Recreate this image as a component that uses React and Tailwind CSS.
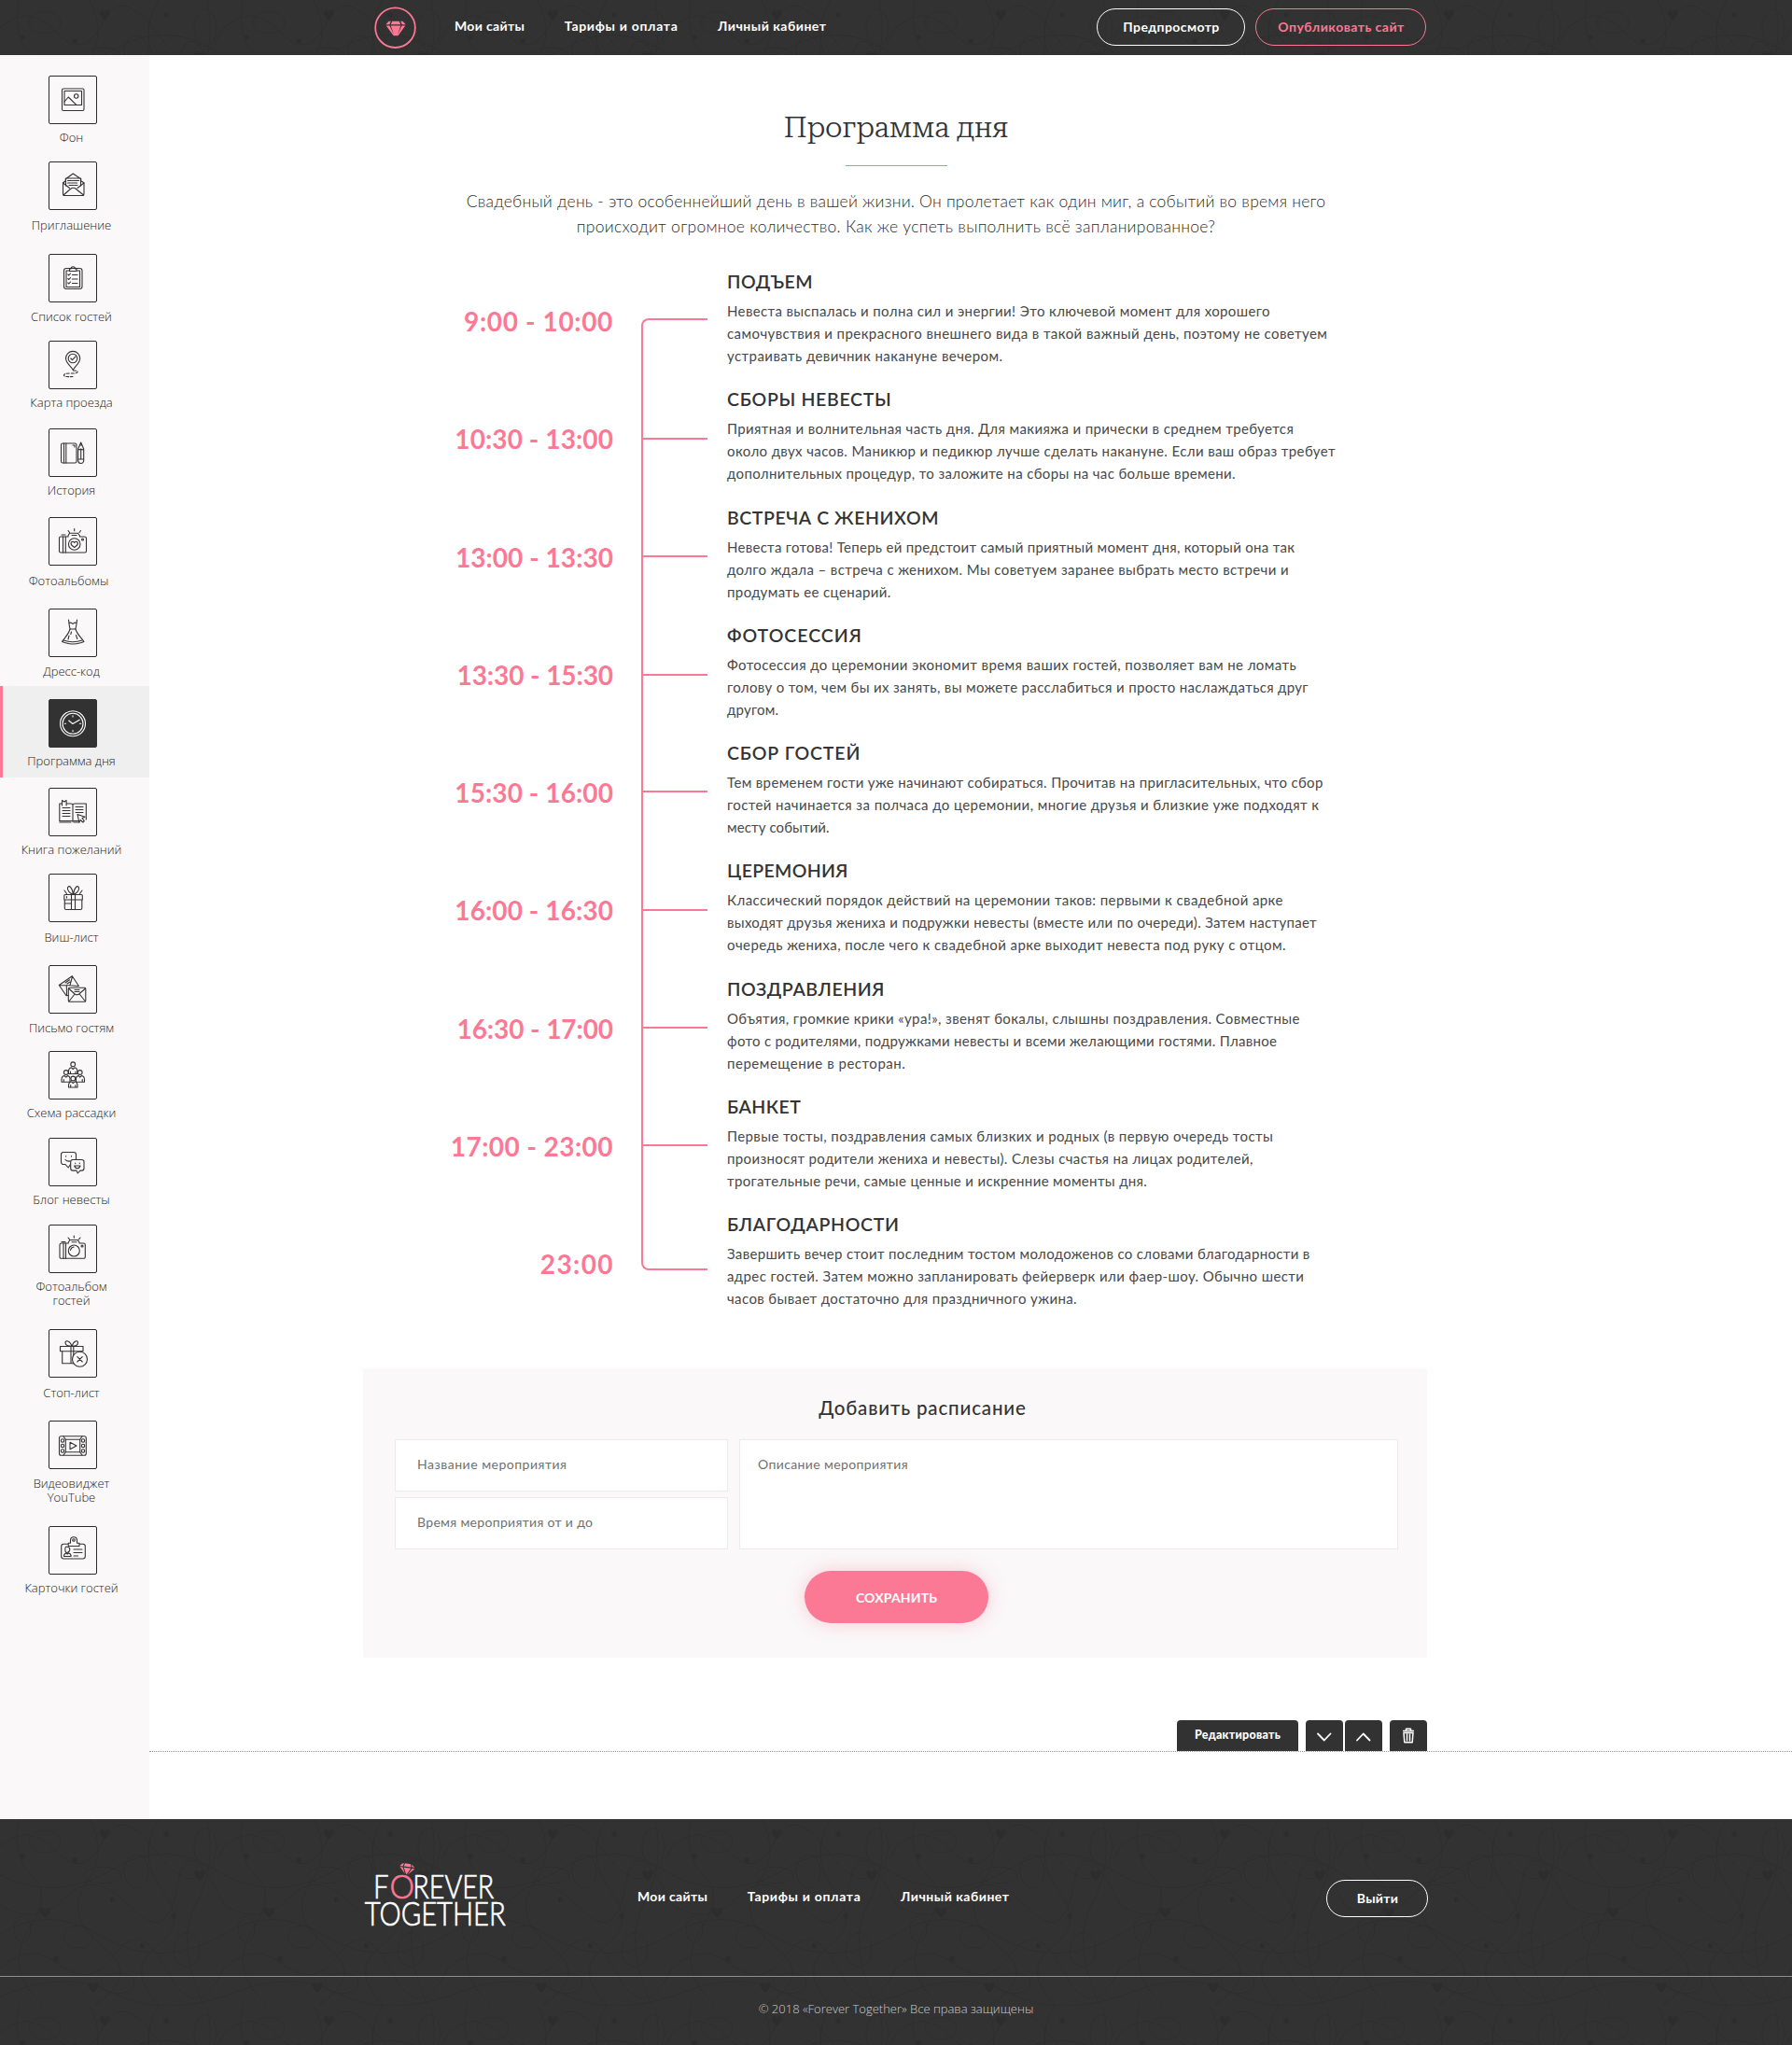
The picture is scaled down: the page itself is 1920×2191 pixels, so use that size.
import React from "react";

const c = (d) => <path d={d} />;

const icons = {
  background: (
    <>
      <rect x="14.5" y="14" width="23.5" height="23.5" rx="1.5" />
      <rect x="17" y="16.5" width="18.5" height="15" />
      <circle cx="29.7" cy="22" r="2.2" />
      {c("M17 28l4.2-5 8.6 8.3")}
    </>
  ),
  invite: (
    <>
      {c("M18 19l8.3-6 8.7 6M18.5 18h16v8M18.5 18v8M18.5 20.5l-3 2.5v11.500a2 2 0 0 0 2 2h18.500a2 2 0 0 0 2-2V23l-3.500-2.500")}
      {c("M15.500 23l7 5.500M38 23l-7 5.500M16 36l7.500-6.500q3-2.500 6 0L37.500 36")}
      {c("M20.500 20.500h5m1 0h6M20.500 23h3m1 0h6M22 25.500h5m1 0h3")}
    </>
  ),
  list: (
    <>
      <rect x="16.500" y="15.500" width="19.500" height="22" rx="2.500" />
      {c("M22 18h-3v17.500h14.500V18h-3")}
      {c("M22.500 18.500v-2.500h1.500a2 2 0 0 1 4.500 0h1.500v2.500z")}
      {c("M20.800 22l1 1 1.700-2M20.800 26.500l1 1 1.700-2M20.800 31l1 1 1.700-2M25.500 22.500h5.500M25.500 27h5.500M25.500 31.500h5.500")}
    </>
  ),
  map: (
    <>
      {c("M26.300 31.500c-2-4-7.800-7.500-7.800-12.500a7.600 7.600 0 0 1 15.200 0c0 5-5.400 8.500-7.400 12.500z")}
      <circle cx="26" cy="19" r="4.800" />
      {c("M23.800 19l1.700 1.700 3.300-3.500")}
      <path strokeDasharray="3 1.800" d="M26.500 32c3 0 5 .500 4.500 1.800s-4 1.200-8 1.200-6.500.500-6.500 2 2.500 1.800 9.500 1.500" />
    </>
  ),
  story: (
    <>
      <rect x="13.500" y="16" width="16.500" height="21" rx="1.800" />
      {c("M16.500 16v21M18.800 16v21M26 18h2v2")}
      {c("M34.700 15l-3 7v12.500a2.500 2.500 0 0 0 6 0V22zM31.700 22q1.500 1.500 3 0 1.500 1.500 3 0M34.700 22.500v10.500M31.700 33h6M33.500 18h2.400")}
    </>
  ),
  cameraHeart: (
    <>
      {c("M21 21v-1l1.500-2.800h9L33.500 20v1H38.500a2 2 0 0 1 2 2v13.500a1.500 1.500 0 0 1-1.500 1.500H13a1.500 1.500 0 0 1-1.500-1.500V22.500A1.500 1.500 0 0 1 13 21z")}
      {c("M15.500 21v17M18.300 21v17M14 19h4M25 19.500h5")}
      <circle cx="27.700" cy="29" r="6.300" />
      {c("M27.700 32.500c-1.700-1.200-3.700-2.500-3.700-4.300 0-2.200 2.700-2.500 3.700-.700 1-1.800 3.700-1.500 3.700.7 0 1.800-2 3.100-3.700 4.300z")}
      <circle cx="36.500" cy="24" r="1" />
      {c("M27.700 12.500v2.300M21 14.500l1.500 2M34.500 14.500l-1.500 2")}
    </>
  ),
  dress: (
    <>
      {c("M21.500 12l.5 4.500q.5 3.500 1.200 5.500M30.500 12l-.5 4.500q-.5 3.500-1.200 5.500M22 15.500q2.300-1 4 1 1.700-2 4-1M23 22h6")}
      {c("M23 22c-1.500 5.500-5 8.500-8.500 13.500 2 .5 3 1.500 5 1.500 2 .8 4 1 6.500 1s5-.2 7-1c2 0 3-1 5-1.500-3.500-5-7.500-8-9-13.500")}
      {c("M16 34q10 3.500 20 0M22 29l-1 4M24.500 25l-.7 2.500M29.500 28.500l1.300 4")}
    </>
  ),
  clock: (
    <>
      <circle cx="26" cy="26.300" r="13.500" />
      <circle cx="26" cy="26.300" r="11" />
      {c("M21.700 23l4.200 3.500 7.300-4.300M26 17.800v1.200M26 33.500v1.300M17.300 26.300h1.200M33.500 26.300h1.300")}
    </>
  ),
  wishes: (
    <>
      {c("M14.500 17H11.800v18.500h13q1.200 1.300 2.400 0H32M19.500 17H24q2 0 2 1.500 0-1.500 2-1.500h12.300v17M26 18.500V35.500M14.500 19v-5.500l2.300 1.500 2.300-1.500V19M11.800 37H24M27 37h6")}
      {c("M15 21.500h8M15 24.500h8M15 27.500h8M15 30.500h8M29 20.500h8M29 23.500h8M29 26.500h8")}
      {c("M31 28.500l8 2.800-3 1.200 2.300 3-1.500 1.500-2.500-2.500-1.500 2.500z")}
    </>
  ),
  gift: (
    <>
      {c("M16.800 23.500a1 1 0 0 1 1-1h17.500a1 1 0 0 1 1 1V28H16.800zM17.300 28v9a1.500 1.500 0 0 0 1.500 1.500h15.500a1.500 1.500 0 0 0 1.500-1.500v-9M24.500 22.500v16M28.500 22.500v16")}
      {c("M26.500 22.500c-3-1-7-4-6-7.500 1.500-3.500 5 0 6 7.500zM26.500 22.500c3-1 7-4 6-7.500-1.500-3.500-5 0-6 7.500zM17 18l2.500 3.500M36 18l-2.500 3.500")}
      {c("M19.500 26v-1.500M17.300 32h7")}
    </>
  ),
  letters: (
    <>
      {c("M21 32.500l-2 .2-7.700-11.200 14-9.800 7 10.500M11.500 21.500l11.500.2 2.500-9.700M19.500 32l-.2-10.500M23 21.700L32 22.500M18 19l4.500-3.200M20 20l3-2")}
      <rect x="21.300" y="24.300" width="18.500" height="15" rx="1.200" />
      {c("M21.600 25l6.500 6q2.300 1.500 4.600 0l6.800-6M21.800 39l6.300-8M39.500 39l-6.300-8M28 26.500h5M28 28.500h5")}
    </>
  ),
  seating: (
    <>
      <circle cx="26.200" cy="14.300" r="2.400" />
      {c("M21.500 24.500v-2.500q0-3.500 3-4.200l1.700 1.700 1.700-1.700q3 .7 3 4.200v2.500zM23.500 22v2.500M29 22v2.500")}
      <circle cx="18.800" cy="23" r="2.400" />
      {c("M14 33.200v-2.500q0-3.500 3-4.200l1.800 1.700 1.700-1.700q2.500.7 2.500 3v3.700zM16.300 30.500v2.500")}
      <circle cx="33.700" cy="23" r="2.400" />
      {c("M38.500 33.200v-2.500q0-3.500-3-4.200l-1.800 1.700-1.700-1.700q-2.500.7-2.500 3v3.700zM36.200 30.500v2.500")}
      <circle cx="26.300" cy="29.500" r="2.400" />
      {c("M21.500 39v-2q0-3.500 3-4.200l1.800 1.700 1.700-1.700q3 .7 3 4.200v2zM23.700 36.500v2.500M28.900 36.500v2.500")}
    </>
  ),
  blog: (
    <>
      {c("M23.500 28.500l-2.300 3.500-3.200-3.500h-2a2.500 2.500 0 0 1-2.500-2.500v-8a2.500 2.500 0 0 1 2.500-2.500h11a2.500 2.500 0 0 1 2.500 2.500v5.500M18.700 19.500v.6M24.500 19.500v.6M18 23.500q2 2.200 5 1.500")}
      {c("M26 23.500h9.700a2.300 2.300 0 0 1 2.300 2.300v7a2.300 2.300 0 0 1-2.300 2.300H34L31.300 38 30 35.100H26a2.300 2.300 0 0 1-2.300-2.300v-7A2.300 2.300 0 0 1 26 23.500zM28.700 27v.6M33.300 27v.6M27.700 30h6.300q-.7 2.700-3.100 2.700T27.700 30z")}
    </>
  ),
  camera: (
    <>
      {c("M21.300 20v-1l1.500-2.500h8.500L33 19v1h4.500a1.800 1.800 0 0 1 1.800 1.800v13a1.500 1.500 0 0 1-1.500 1.500h-24.300a1.500 1.500 0 0 1-1.500-1.500v-13A1.800 1.800 0 0 1 13.800 20z")}
      {c("M16 20v16.300M18.500 20v16.300M14 18.500h4M25 18.700h5M23.500 27.500q.5-3 3.500-3.500")}
      <circle cx="27.300" cy="28" r="6" />
      <circle cx="36" cy="23" r="1" />
      {c("M27.300 12v2.200M21 14l1.500 1.800M34 14l-1.500 1.800")}
    </>
  ),
  stop: (
    <>
      <rect x="12.500" y="18.500" width="24.500" height="5.300" />
      {c("M14.700 23.800v13h13M35.300 23.800v3M24 18.500v18.300M26.800 18.500v10")}
      {c("M25 18.300c-3.500 0-7-1-7-3.800 0-3 5-2.500 7 3.800zM25 18.300c3.500 0 6.500-1 6.500-3.800 0-3-4.500-2.500-6.500 3.800z")}
      <circle cx="33.500" cy="32.300" r="8" className="fill-[#faf8f9]" />
      {c("M30.800 29.600l5.400 5.400M36.200 29.600l-5.400 5.400")}
    </>
  ),
  video: (
    <>
      <rect x="11.500" y="16.800" width="28.800" height="20.400" rx="2" />
      <rect x="18.300" y="20.300" width="15.400" height="13.500" />
      {c("M23 23.300v7.500l7-3.800zM16 17l2.300 3.300M36 17l-2.300 3.300M18.300 33.800L16 37M33.700 33.800L36 37")}
      {[21.5, 27, 32.5].map((y) => (
        <React.Fragment key={y}>
          <circle cx="15" cy={y} r="1.700" />
          <circle cx="37" cy={y} r="1.700" />
        </React.Fragment>
      ))}
    </>
  ),
  cards: (
    <>
      {c("M21 19.300h-4.800a2.500 2.500 0 0 0-2.500 2.500v10.700a2.500 2.500 0 0 0 2.500 2.500h20.600a2.500 2.500 0 0 0 2.500-2.500V21.800a2.500 2.500 0 0 0-2.500-2.500H33M21.200 21.500V18.300h2.300v-3a3.500 3.500 0 0 1 7 0v3h2.500v3.200z")}
      <circle cx="27" cy="15" r="1.300" />
      {c("M20.300 22.500q2.500 0 2.500 2.500t-2.500 3.300-2.500-3.300 2.500-2.500zM16.500 32.500q0-3 2.500-3.500l1.300 1 1.300-1q2.500.5 2.500 3.500zM27 25h9M27 28.500h9M27 32h4.500")}
    </>
  ),
};

// icon, label, row height, label offset
const sidebar = [
  ["background", "Фон", "h-[92px]", "mt-[7px]"],
  ["invite", "Приглашение", "h-[99px]", "mt-[9px]"],
  ["list", "Список гостей", "h-[93px]", "mt-[8px]"],
  ["map", "Карта проезда", "h-[94px]", "mt-[7px]"],
  ["story", "История", "h-[95px]", "mt-[7px]"],
  ["cameraHeart", "Фотоальбомы", "h-[98px]", "mt-[9px] -ml-[3px]"],
  ["dress", "Дресс-код", "h-[97px]", "mt-[8px]"],
  ["clock", "Программа дня", "h-[98px]", "mt-[7px]"],
  ["wishes", "Книга пожеланий", "-mt-[3px] h-[92px]", "mt-[7px]"],
  ["gift", "Виш-лист", "h-[98px]", "mt-[9px]"],
  ["letters", "Письмо гостям", "h-[92px]", "mt-[8px]"],
  ["seating", "Схема рассадки", "h-[93px]", "mt-[7px]"],
  ["blog", "Блог невесты", "h-[93px]", "mt-[7px]"],
  ["camera", "Фотоальбом\nгостей", "h-[112px]", "mt-[7px]"],
  ["stop", "Стоп-лист", "h-[98px]", "mt-[9px]"],
  ["video", "Видеовиджет\nYouTube", "h-[113px]", "mt-[8px]"],
  ["cards", "Карточки гостей", "h-[92px]", "mt-[7px]"],
];

const schedule = [
  {
    time: ["9:00 - 10:00", "tracking-[0.650px]"],
    title: ["ПОДЪЕМ", "tracking-[0.570px]"],
    lines: [
      ["Невеста выспалась и полна сил и энергии! Это ключевой момент для хорошего", "tracking-[0.380px]"],
      ["самочувствия и прекрасного внешнего вида в такой важный день, поэтому не советуем", "tracking-[0.430px]"],
      ["устраивать девичник накануне вечером.", "tracking-[0.440px]"],
    ],
  },
  {
    time: ["10:30 - 13:00", "tracking-[0.100px]"],
    title: ["СБОРЫ НЕВЕСТЫ", "tracking-[0.690px]"],
    lines: [
      ["Приятная и волнительная часть дня. Для макияжа и прически в среднем требуется", "tracking-[0.380px]"],
      ["около двух часов. Маникюр и педикюр лучше сделать накануне. Если ваш образ требует", "tracking-[0.390px]"],
      ["дополнительных процедур, то заложите на сборы на час больше времени.", "tracking-[0.370px]"],
    ],
  },
  {
    time: ["13:00 - 13:30", "tracking-[0.050px]"],
    title: ["ВСТРЕЧА С ЖЕНИХОМ", "tracking-[0.560px]"],
    lines: [
      ["Невеста готова! Теперь ей предстоит самый приятный момент дня, который она так", "tracking-[0.290px]"],
      ["долго ждала – встреча с женихом. Мы советуем заранее выбрать место встречи и", "tracking-[0.380px]"],
      ["продумать ее сценарий.", "tracking-[0.400px]"],
    ],
  },
  {
    time: ["13:30 - 15:30", "tracking-[-0.070px]"],
    title: ["ФОТОСЕССИЯ", "tracking-[0.990px]"],
    lines: [
      ["Фотосессия до церемонии экономит время ваших гостей, позволяет вам не ломать", "tracking-[0.420px]"],
      ["голову о том, чем бы их занять, вы можете расслабиться и просто наслаждаться друг", "tracking-[0.350px]"],
      ["другом.", "tracking-[0.250px]"],
    ],
  },
  {
    time: ["15:30 - 16:00", "tracking-[0.100px]"],
    title: ["СБОР ГОСТЕЙ", "tracking-[0.840px]"],
    lines: [
      ["Тем временем гости уже начинают собираться. Прочитав на пригласительных, что сбор", "tracking-[0.360px]"],
      ["гостей начинается за полчаса до церемонии, многие друзья и близкие уже подходят к", "tracking-[0.420px]"],
      ["месту событий.", "tracking-[0.100px]"],
    ],
  },
  {
    time: ["16:00 - 16:30", "tracking-[0.100px]"],
    title: ["ЦЕРЕМОНИЯ", "tracking-[0.330px]"],
    lines: [
      ["Классический порядок действий на церемонии таков: первыми к свадебной арке", "tracking-[0.410px]"],
      ["выходят друзья жениха и подружки невесты (вместе или по очереди). Затем наступает", "tracking-[0.320px]"],
      ["очередь жениха, после чего к свадебной арке выходит невеста под руку с отцом.", "tracking-[0.430px]"],
    ],
  },
  {
    time: ["16:30 - 17:00", "tracking-[-0.070px]"],
    title: ["ПОЗДРАВЛЕНИЯ", "tracking-[0.570px]"],
    lines: [
      ["Объятия, громкие крики «ура!», звенят бокалы, слышны поздравления. Совместные", "tracking-[0.390px]"],
      ["фото с родителями, подружками невесты и всеми желающими гостями. Плавное", "tracking-[0.310px]"],
      ["перемещение в ресторан.", "tracking-[0.530px]"],
    ],
  },
  {
    time: ["17:00 - 23:00", "tracking-[0.450px]"],
    title: ["БАНКЕТ", "tracking-[0.500px]"],
    lines: [
      ["Первые тосты, поздравления самых близких и родных (в первую очередь тосты", "tracking-[0.400px]"],
      ["произносят родители жениха и невесты). Слезы счастья на лицах родителей,", "tracking-[0.360px]"],
      ["трогательные речи, самые ценные и искренние моменты дня.", "tracking-[0.350px]"],
    ],
  },
  {
    time: ["23:00", "-mr-px tracking-[1.400px]"],
    title: ["БЛАГОДАРНОСТИ", "tracking-[0.660px]"],
    lines: [
      ["Завершить вечер стоит последним тостом молодоженов со словами благодарности в", "tracking-[0.340px]"],
      ["адрес гостей. Затем можно запланировать фейерверк или фаер-шоу. Обычно шести", "tracking-[0.410px]"],
      ["часов бывает достаточно для праздничного ужина.", "tracking-[0.390px]"],
    ],
  },
];

const ticks = ["h-[128px]", "h-[126px]", "h-[127px]", "h-[125px]", "h-[127px]", "h-[126px]", "h-[126px]"];

function Ornament({ id }) {
  return (
    <svg className="pointer-events-none absolute inset-0 h-full w-full" aria-hidden="true">
      <defs>
        <pattern id={id} width="240" height="200" patternUnits="userSpaceOnUse">
          <g fill="none" stroke="#2d2d2d" strokeWidth="1">
            <path d="M0 30q30-28 60 4t50-10 60 14 70-8" />
            <path d="M0 92q40 24 70-8t70 10 50-22 50 20" />
            <path d="M0 160q30-30 64-4t60-12 56 20 60-4" />
            <path d="M20 0q-8 40 14 60t-4 60 16 80M96 0q20 36-4 70t18 66-10 64M170 0q-24 40 4 76t-6 60 2 64M222 0q10 50-12 90t8 110" />
            <ellipse cx="48" cy="24" rx="17" ry="12" />
            <ellipse cx="146" cy="56" rx="13" ry="18" />
            <ellipse cx="84" cy="126" rx="16" ry="12" />
            <ellipse cx="200" cy="140" rx="14" ry="18" />
            <ellipse cx="24" cy="118" rx="9" ry="14" />
            <ellipse cx="126" cy="176" rx="18" ry="11" />
            <ellipse cx="110" cy="60" rx="20" ry="9" />
            <ellipse cx="220" cy="30" rx="12" ry="20" />
            <path d="M0 60q60 30 120-6t120 6M0 124q50-34 110 2t130-2M0 190q70-30 120-4t120 4" />
          </g>
          <g fill="#2d2d2d">
            <circle cx="24" cy="40" r="3" />
            <circle cx="80" cy="44" r="3" />
            <circle cx="178" cy="16" r="3" />
            <circle cx="120" cy="86" r="2.500" />
            <circle cx="186" cy="104" r="3" />
            <circle cx="60" cy="150" r="3" />
            <circle cx="152" cy="136" r="2.500" />
            <path d="M112 22c-6-5-7-12-2-11q2 0 2 3 0-3 3-3c5 0 3 7-3 11zM48 106c-6-5-8-11-3-11q3 0 3 3 0-3 3-3c5 0 3 7-3 11zM214 66c-6-5-8-11-3-11q3 0 3 3 0-3 3-3c5 0 3 7-3 11zM100 186c-6-5-8-11-3-11q3 0 3 3 0-3 3-3c5 0 3 7-3 11z" />
          </g>
        </pattern>
      </defs>
      <rect width="100%" height="100%" fill={`url(#${id})`} />
    </svg>
  );
}

const Nav = ({ className }) => (
  <nav className={`flex gap-[42.500px] text-[14px] leading-5 font-bold text-white ${className}`}>
    <a className="tracking-[0.350px]">Мои сайты</a>
    <a className="tracking-[0.690px]">Тарифы и оплата</a>
    <a className="tracking-[0.500px]">Личный кабинет</a>
  </nav>
);

const tool = "flex h-[33px] items-center justify-center rounded-t-[4px] bg-[#323232]";

export default function App() {
  return (
    <div className="relative w-[1920px] bg-white font-['Lato','Noto_Sans',sans-serif] text-[#333]">
      <header className="relative h-[59px] bg-[#323232]">
        <Ornament id="ornament-top" />
        <div className="relative flex h-[56px] items-center pl-[401px]">
          <svg className="mt-1 h-[46px] w-[46px]" viewBox="0 0 46 46">
            <circle cx="22.500" cy="22.700" r="21.300" fill="none" stroke="#fc7995" strokeWidth="1.800" />
            <g fill="#fc7995">
              <path d="M15.500 15.700h2.300l-1.500 3.600h-4zM19.200 15.700h7.600l1.400 3.600H17.700zM28.200 15.700h2.300l3.300 3.600h-4.100zM12.700 20.400h3.800l4.900 10.800h-.8zM17.700 20.400h10.600L24.700 31.200h-3.400zM29.500 20.400h3.800L25.500 31.200h-.900z" />
            </g>
          </svg>
          <Nav className="ml-[40px]" />
          <div className="ml-[290px] flex gap-[11px] pt-[2px] text-[14px] font-bold">
            <button className="flex h-[40px] w-[159px] items-center justify-center rounded-full border border-white pb-[2px] tracking-[0.430px] text-white">Предпросмотр</button>
            <button className="flex h-[40px] w-[183px] items-center justify-center rounded-full border border-[#fc7995] pb-[2px] tracking-[0.490px] text-[#fc7995]">Опубликовать сайт</button>
          </div>
        </div>
      </header>

      <div className="flex h-[1890px]">
        <aside className="w-[160px] shrink-0 bg-[#faf8f9] pt-[8px] font-['Open_Sans','Noto_Sans',sans-serif]">
          {sidebar.map(([icon, label, h, gap]) => {
            const active = icon === "clock";
            return (
              <div key={icon} className={`${h} pt-[14px] ${active ? "bg-[linear-gradient(90deg,#fc7995_3px,#efefef_3px)]" : ""}`}>
                <div className={`ml-[52px] h-[52px] w-[52px] rounded-[2px] border ${active ? "border-[#323232] bg-[#323232]" : "border-[#2b2b2b]"}`}>
                  <svg viewBox="1 1 50 50" className="h-[50px] w-[50px]" fill="none" stroke={active ? "#fff" : "#333"} strokeWidth="1.100" strokeLinecap="round" strokeLinejoin="round">
                    {icons[icon]}
                  </svg>
                </div>
                <div className={`${gap} w-[153px] text-center text-[13px] leading-[15px] font-light whitespace-pre-line text-[#222]`}>{label}</div>
              </div>
            );
          })}
        </aside>

        <main className="flex-1">
          <div className="ml-[230px] w-[1140px]">
            <h1 className="pt-[57px] text-center font-['Roboto_Serif','Noto_Serif',serif] text-[31px] leading-[42px] font-light tracking-[-0.300px]">Программа дня</h1>
            <div className="mx-auto mt-[19px] h-px w-[109px] bg-[#fc7995]" />
            <p className="mt-[24px] text-center text-[17.500px] leading-[27px] font-light whitespace-nowrap text-[#2a2a2a]">
              <span className="tracking-[0.230px]">Свадебный день - это особеннейший день в вашей жизни. Он пролетает как один миг, а событий во время него</span>
              <br />
              <span className="tracking-[0.270px]">происходит огромное количество. Как же успеть выполнить всё запланированное?</span>
            </p>

            <section className="mt-[34px] flex">
              <div className="w-[267px] pt-[40px] text-right text-[28px] leading-[28px] font-bold text-[#fc7995]">
                {schedule.map(({ time: [text, tracking] }) => (
                  <div key={text} className={`mb-[98.250px] last:mb-0 ${tracking}`}>{text}</div>
                ))}
              </div>
              <div className="mt-[51px] ml-[30px] h-[1020px] w-[71px] rounded-l-[8px] border-2 border-r-0 border-[#fc7995]">
                {ticks.map((h, i) => (
                  <div key={i} className={`${h} border-b-2 border-[#fc7995]`} />
                ))}
              </div>
              <div className="ml-[21px]">
                {schedule.map(({ title: [title, titleTracking], lines }) => (
                  <article key={title} className="mb-[22.750px] pb-[0.500px]">
                    <h2 className={`text-[19.500px] leading-6 font-semibold ${titleTracking}`}>{title}</h2>
                    <p className="mt-[7px] text-[15px] leading-6 whitespace-nowrap text-[#484848]">
                      {lines.map(([line, tracking]) => (
                        <span key={line} className={`block ${tracking}`}>{line}</span>
                      ))}
                    </p>
                  </article>
                ))}
              </div>
            </section>

            <form className="mt-[40px] -ml-px h-[310px] w-[1140px] rounded-[3px] bg-[#faf8f9] pt-[30px] pl-[34px]">
              <h3 className="pl-[25px] text-center text-[20.500px] leading-6 font-medium tracking-[0.850px]">Добавить расписание</h3>
              <div className="mt-[22px] flex gap-3 text-[14px] leading-5 tracking-[0.380px] text-[#707070]">
                <div className="flex w-[357px] flex-col gap-[6px]">
                  <div className="h-[56px] border border-[#ececec] bg-white px-[23px] pt-[16px] tracking-[0.510px]">Название мероприятия</div>
                  <div className="h-[56px] border border-[#ececec] bg-white px-[23px] pt-[16px] tracking-[0.320px]">Время мероприятия от и до</div>
                </div>
                <div className="h-[118px] w-[706px] border border-[#ececec] bg-white px-[19px] pt-[16px]">Описание мероприятия</div>
              </div>
              <button type="button" className="mt-[23px] ml-[439px] flex h-[56px] w-[197px] items-center justify-center rounded-full bg-[#fc7995] text-[14px] font-bold tracking-[0.170px] text-white shadow-[0_0_20px_rgba(252,121,149,0.35)]">СОХРАНИТЬ</button>
            </form>

            <div className="mt-[67px] flex justify-end pr-px text-white">
              <button className={`${tool} w-[130px] pb-px text-[12.500px] font-black tracking-[0.250px]`}>Редактировать</button>
              <button className={`${tool} ml-2 w-[40px]`}>
                <svg className="mt-[2px] h-4 w-4" viewBox="0 0 16 16" fill="none" stroke="currentColor" strokeWidth="1.800" strokeLinecap="round" strokeLinejoin="round"><path d="M1 4.500L7.800 11.500 14.500 4.500" /></svg>
              </button>
              <button className={`${tool} ml-[2px] w-[40px]`}>
                <svg className="mt-[2px] h-4 w-4" viewBox="0 0 16 16" fill="none" stroke="currentColor" strokeWidth="1.800" strokeLinecap="round" strokeLinejoin="round"><path d="M1 11.500L7.700 4.500 14.500 11.500" /></svg>
              </button>
              <button className={`${tool} ml-2 w-[40px]`}>
                <svg className="h-[17px] w-[14px]" viewBox="0 0 14 17" fill="none" stroke="currentColor" strokeWidth="1.500" strokeLinejoin="round"><path d="M1 3.500h12M4.500 3.500V1.200h5v2.300M2 5.500l.800 10.200h8.400L12 5.500zM5.500 6.500v8M8.500 6.500v8" /></svg>
              </button>
            </div>
          </div>
          <div className="border-t border-dotted border-[#999]" />
        </main>
      </div>

      <footer className="relative h-[242px] bg-[#323232]">
        <Ornament id="ornament-bottom" />
        <div className="relative flex h-[168px] pl-[389px]">
          <svg className="mt-[45px] h-[75px] w-[154px] overflow-visible font-['Lato',sans-serif] font-light" viewBox="389 1994 154 75">
            <g fill="#fff" stroke="#fff" strokeWidth="0.700" fontSize="35">
              <text x="400" y="2034.300" textLength="16.500" lengthAdjust="spacingAndGlyphs">F</text>
              <text x="417.500" y="2034.300" textLength="26.500" lengthAdjust="spacingAndGlyphs" fill="#fc7995" stroke="#fc7995">O</text>
              <text x="442.300" y="2034.300" textLength="87" lengthAdjust="spacingAndGlyphs">REVER</text>
              <text x="390.800" y="2062.700" textLength="151" lengthAdjust="spacingAndGlyphs">TOGETHER</text>
            </g>
            <path fill="#fc7995" d="M431 1996.500l2-.3-1.500 3.300-3.200-.5zM434 1996.300l6 1 .5 3.200-7.800-1zM441 1997.500l3.300 3.500-2.800-.4zM428.500 2000l3 .5 2.500 7.300zM432.600 2000.700l7.700 1-4.900 6.700zM441.500 2001.900l3 .3-7.800 6.400z" />
          </svg>
          <Nav className="mt-[73px] ml-[140px]" />
          <button className="mt-[65px] ml-[340px] flex h-[40px] w-[109px] items-center justify-center rounded-full border border-white pb-[2px] text-[14px] font-bold tracking-[0.250px] text-white">Выйти</button>
        </div>
        <div className="relative h-px bg-[#8e8e8e]" />
        <p className="relative pt-[24px] text-center font-['Open_Sans','Noto_Sans',sans-serif] text-[13px] leading-5 font-light text-[#ccc]">© 2018 «Forever Together» Все права защищены</p>
      </footer>
    </div>
  );
}
